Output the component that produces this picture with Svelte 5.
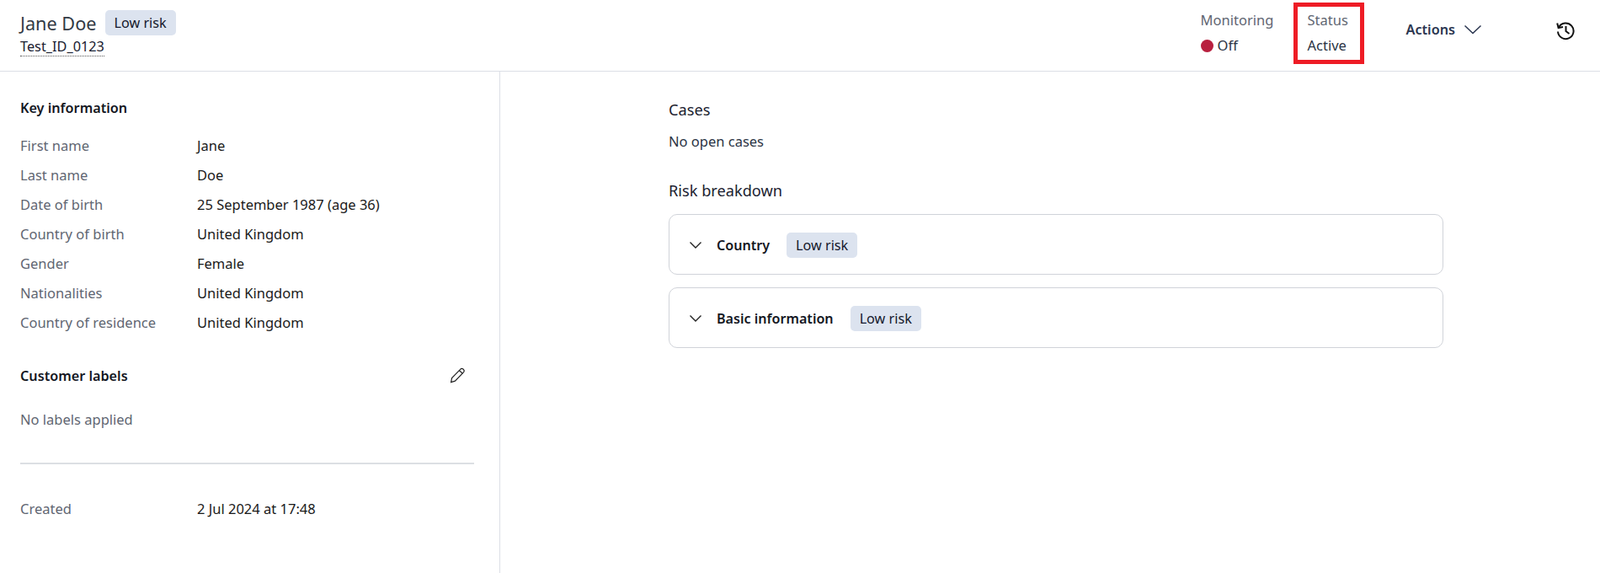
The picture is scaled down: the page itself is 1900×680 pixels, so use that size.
<script>
	let info = [
		['First name', 'Jane'],
		['Last name', 'Doe'],
		['Date of birth', '25 September 1987 (age 36)'],
		['Country of birth', 'United Kingdom'],
		['Gender', 'Female'],
		['Nationalities', 'United Kingdom'],
		['Country of residence', 'United Kingdom']
	];
	let risks = ['Country', 'Basic information'];
</script>

<div class="page">
	<header>
		<div class="who">
			<div class="name-row">
				<span class="name">Jane Doe</span>
				<span class="badge">Low risk</span>
			</div>
			<span class="id">Test_ID_0123</span>
		</div>
		<div class="top-right">
			<div class="meta monitoring">
				<span class="meta-label">Monitoring</span>
				<span class="meta-value"><i class="dot"></i>Off</span>
			</div>
			<div class="meta status">
				<span class="meta-label">Status</span>
				<span class="meta-value">Active</span>
			</div>
			<button type="button" class="actions">
				Actions
				<svg width="22" height="12" viewBox="0 0 22 12" fill="none" stroke="#2b3650" stroke-width="1.5">
					<path d="M1.5 1.5 L11 10.5 L20.5 1.5" />
				</svg>
			</button>
			<svg class="history" width="24" height="24" viewBox="0 0 24 24" fill="none" stroke="#111" stroke-width="2">
				<path d="M4.2 8.2 A9.3 9.3 0 1 1 3 13.5" />
				<path d="M2.2 3.6 L3.6 9 L9 8" />
				<path d="M12.5 7 V13 L16.5 16" />
			</svg>
		</div>
	</header>

	<div class="body">
		<aside>
			<h2>Key information</h2>
			<dl>
				{#each info as [label, value]}
					<div class="row">
						<dt>{label}</dt>
						<dd>{value}</dd>
					</div>
				{/each}
			</dl>

			<div class="labels-head">
				<h2>Customer labels</h2>
				<svg width="20" height="20" viewBox="0 0 20 20" fill="none" stroke="#222" stroke-width="1.2">
					<path d="M2.6 17.6 L3.6 12.6 L13.6 2.4 A2 2 0 0 1 17.4 5.8 L7.4 16.2 Z" />
					<path d="M12.4 3.8 L16.2 7" />
				</svg>
			</div>
			<p class="muted">No labels applied</p>

			<hr />

			<div class="row created">
				<dt>Created</dt>
				<dd>2 Jul 2024 at 17:48</dd>
			</div>
		</aside>

		<main>
			<h3>Cases</h3>
			<p class="cases">No open cases</p>
			<h3 class="risk-title">Risk breakdown</h3>
			{#each risks as risk}
				<div class="card">
					<svg width="16" height="10" viewBox="0 0 16 10" fill="none" stroke="#222" stroke-width="1.4">
						<path d="M1.5 1.5 L8 8 L14.5 1.5" />
					</svg>
					<span class="card-title">{risk}</span>
					<span class="badge">Low risk</span>
				</div>
			{/each}
		</main>
	</div>
</div>

<style>
	:global(body) {
		margin: 0;
		background: #fff;
	}
	.page {
		height: 680px;
		display: flex;
		flex-direction: column;
		font-family: 'Noto Sans', sans-serif;
		font-size: 16.5px;
		color: #1a1a1a;
		overflow: hidden;
	}
	header {
		height: 84px;
		flex: none;
		border-bottom: 1px solid #dcdfe6;
		display: flex;
		justify-content: space-between;
		padding: 0 29px 0 24px;
	}
	.who {
		padding-top: 12px;
		display: flex;
		flex-direction: column;
		align-items: flex-start;
	}
	.name-row {
		display: flex;
		align-items: center;
		gap: 10px;
		height: 30px;
	}
	.name {
		font-size: 21.7px;
		color: #333a45;
	}
	.badge {
		background: #dce3ef;
		border-radius: 5px;
		height: 30px;
		line-height: 30px;
		padding: 0 11px;
		font-size: 16.2px;
		color: #14182c;
		white-space: nowrap;
	}
	.id {
		margin-top: 2px;
		line-height: 22px;
		font-size: 16.3px;
		border-bottom: 1px dotted #555;
		color: #1a2030;
	}
	.top-right {
		display: flex;
		align-items: flex-start;
	}
	.meta {
		display: flex;
		flex-direction: column;
	}
	.monitoring {
		padding-top: 13px;
		width: 110px;
	}
	.status {
		margin-top: 3px;
		width: 84px;
		height: 73px;
		box-sizing: border-box;
		border: 5px solid #ee1c25;
		padding: 5px 0 0 12px;
	}
	.meta-label {
		line-height: 22px;
		color: #5f6672;
	}
	.meta-value {
		margin-top: 8px;
		line-height: 22px;
		display: flex;
		align-items: center;
		color: #2b3445;
	}
	.dot {
		width: 15px;
		height: 15px;
		border-radius: 50%;
		background: #b8203f;
		margin-right: 5px;
	}
	.actions {
		margin: 23px 0 0 50px;
		padding: 0;
		border: 0;
		background: none;
		font: inherit;
		font-size: 16.2px;
		font-weight: 600;
		color: #2b3650;
		line-height: 24px;
		display: flex;
		align-items: center;
		gap: 10px;
	}
	.history {
		margin: 24px 0 0 87px;
	}
	.body {
		flex: 1;
		display: flex;
		min-height: 0;
	}
	aside {
		width: 594px;
		flex: none;
		box-sizing: border-box;
		border-right: 1px solid #dcdfe6;
		padding: 31px 30px 0 24px;
	}
	h2 {
		margin: 0;
		font-size: 16.2px;
		font-weight: 600;
		line-height: 24px;
		color: #14171f;
	}
	dl {
		margin: 15px 0 0;
	}
	.row {
		display: flex;
		height: 35px;
		align-items: center;
	}
	dt {
		width: 210px;
		flex: none;
		color: #5f6672;
	}
	dd {
		margin: 0;
		color: #1a1a1a;
	}
	.labels-head {
		margin-top: 34px;
		display: flex;
		justify-content: space-between;
		align-items: center;
		padding-right: 10px;
	}
	.muted {
		margin: 28px 0 0;
		line-height: 24px;
		color: #5f6672;
	}
	hr {
		margin: 39px 0 0;
		border: 0;
		height: 2px;
		background: #dcdfe3;
	}
	.created {
		margin-top: 35px;
	}
	main {
		width: 920px;
		margin-left: 200px;
		padding-top: 33px;
	}
	h3 {
		margin: 0;
		font-size: 18.2px;
		font-weight: 400;
		line-height: 24px;
		color: #1c2230;
	}
	.cases {
		margin: 14px 0 0;
		line-height: 24px;
		color: #2b3445;
	}
	.risk-title {
		margin-top: 34px;
		margin-bottom: 16px;
	}
	.card {
		height: 72px;
		box-sizing: border-box;
		border: 1px solid #d0d3d9;
		border-radius: 10px;
		margin-bottom: 15px;
		display: flex;
		align-items: center;
		padding: 2px 0 0 23px;
	}
	.card-title {
		margin: 0 20px 0 17px;
		font-size: 16.1px;
		font-weight: 600;
		color: #14171f;
	}
</style>
